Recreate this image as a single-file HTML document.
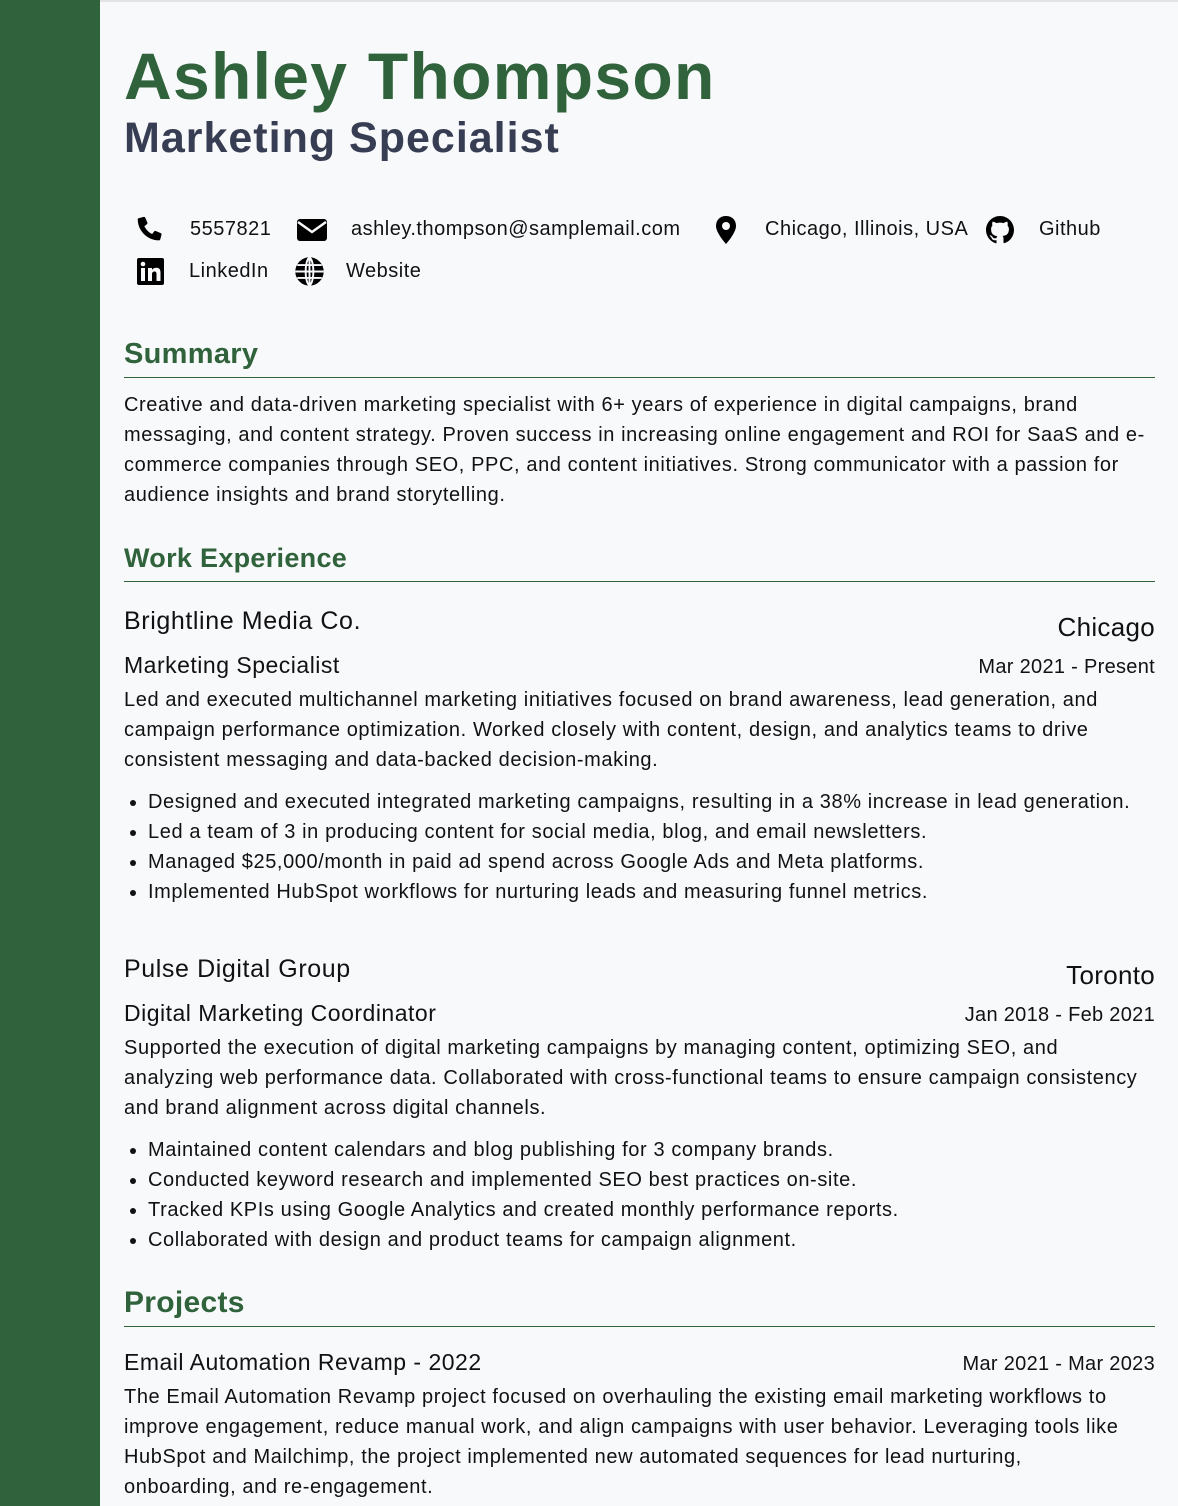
<!DOCTYPE html>
<html><head><meta charset="utf-8"><style>
*{margin:0;padding:0;box-sizing:border-box}
body{width:1178px;height:1506px;overflow:hidden;background:#f8f9fb;font-family:"Liberation Sans",sans-serif;color:#111;position:relative}
.side{position:absolute;left:0;top:0;width:100px;height:1506px;background:#30633b}
.topl{position:absolute;left:100px;top:0;right:0;height:2px;background:#e3e3e3}
.main{position:absolute;left:124px;top:0;width:1031px}
h1{position:absolute;top:38px;font-size:66px;font-weight:bold;color:#30633b;letter-spacing:1.3px;white-space:nowrap}
h2{position:absolute;top:114px;font-size:43px;font-weight:bold;color:#373d52;letter-spacing:1px;white-space:nowrap}
.ab{position:absolute;white-space:nowrap;font-size:20px;line-height:30px;letter-spacing:0.5px}
.sec{position:absolute;left:0;width:1031px;font-weight:bold;color:#30633b;border-bottom:1px solid #30633b;letter-spacing:0.3px}
.p{position:absolute;left:0;width:1100px;font-size:20px;line-height:30px;letter-spacing:0.6px;white-space:nowrap}
ul{position:absolute;left:24px;font-size:20px;line-height:30px;letter-spacing:0.6px;white-space:nowrap}
.r{position:absolute;right:0;white-space:nowrap;letter-spacing:0.3px}
.h{letter-spacing:0.6px}
svg{position:absolute}
</style></head><body>
<div class="side"></div><div class="topl"></div>
<div class="main">
<h1>Ashley Thompson</h1>
<h2>Marketing Specialist</h2>
<svg style="left:10px;top:215px" width="30" height="30" viewBox="0 0 24 24"><path d="M20 2.5l-3.8-1c-.5-.1-1 .1-1.2.6l-1.7 4c-.2.4 0 .9.3 1.2l2.1 1.7c-1.3 2.7-3.5 4.9-6.2 6.2l-1.7-2.1c-.3-.4-.8-.5-1.2-.3l-4 1.7c-.5.2-.7.7-.6 1.2l1 3.8c.1.5.5.8 1 .8C13.3 20.3 21 12.6 21 3.5c0-.5-.3-.9-1-1z" transform="translate(24 0) scale(-1 1)"/></svg>
<div class="ab" style="left:66px;top:214px">5557821</div>
<svg style="left:172px;top:217px" width="32" height="26" viewBox="0 0 32 26"><rect x="1" y="2" width="30" height="22" rx="3" fill="#000"/><path d="M2 5l14 10 14-10" stroke="#f8f9fb" stroke-width="2.5" fill="none"/></svg>
<div class="ab" style="left:227px;top:214px">ashley.thompson@samplemail.com</div>
<svg style="left:590px;top:215px" width="24" height="30" viewBox="0 0 24 30"><path d="M12 1C6 1 2 5 2 11c0 7 10 18 10 18s10-11 10-18C22 5 18 1 12 1z" fill="#000"/><circle cx="12" cy="11" r="4" fill="#f8f9fb"/></svg>
<div class="ab" style="left:641px;top:214px">Chicago, Illinois, USA</div>
<svg style="left:862px;top:216px" width="28" height="28" viewBox="0 0 16 16"><path d="M8 0C3.6 0 0 3.6 0 8c0 3.5 2.3 6.5 5.5 7.6.4.1.5-.2.5-.4v-1.4c-2.2.5-2.7-1-2.7-1-.4-.9-.9-1.2-.9-1.2-.7-.5.1-.5.1-.5.8.1 1.2.8 1.2.8.7 1.2 1.9.9 2.3.7.1-.5.3-.9.5-1.1-1.8-.2-3.6-.9-3.6-4 0-.9.3-1.6.8-2.1-.1-.2-.4-1 .1-2.1 0 0 .7-.2 2.2.8.6-.2 1.3-.3 2-.3s1.4.1 2 .3c1.5-1 2.2-.8 2.2-.8.4 1.1.2 1.9.1 2.1.5.6.8 1.3.8 2.1 0 3.1-1.9 3.7-3.6 3.9.3.3.5.8.5 1.5v2.2c0 .2.1.5.6.4C13.7 14.5 16 11.5 16 8c0-4.4-3.6-8-8-8z"/></svg>
<div class="ab" style="left:915px;top:214px">Github</div>
<svg style="left:13px;top:258px" width="27" height="27" viewBox="0 0 27 27"><rect width="27" height="27" rx="2"/><rect x="4" y="10" width="4" height="13" fill="#f8f9fb"/><circle cx="6" cy="6" r="2.3" fill="#f8f9fb"/><path d="M11 10h4v2c1-2 3-2.3 4.5-2.3 3 0 4 2 4 5V23h-4v-7c0-1.5-.5-2.5-2-2.5s-2.5 1-2.5 2.5v7h-4z" fill="#f8f9fb"/></svg>
<div class="ab" style="left:65px;top:256px">LinkedIn</div>
<svg style="left:170px;top:256px" width="31" height="31" viewBox="0 0 24 24"><circle cx="12" cy="12" r="11"/><path d="M12 1v22M1 12h22M2.5 7h19M2.5 17h19M12 1c-4 3-4 19 0 22M12 1c4 3 4 19 0 22" stroke="#f8f9fb" stroke-width="1.5" fill="none"/></svg>
<div class="ab" style="left:222px;top:256px">Website</div>

<div class="sec" style="top:338px;height:40px;font-size:29px">Summary</div>
<div class="p" style="top:390px">Creative and data-driven marketing specialist with 6+ years of experience in digital campaigns, brand<br>messaging, and content strategy. Proven success in increasing online engagement and ROI for SaaS and e-<br>commerce companies through SEO, PPC, and content initiatives. Strong communicator with a passion for<br>audience insights and brand storytelling.</div>

<div class="sec" style="top:543px;height:39px;font-size:27px">Work Experience</div>
<div class="ab h" style="top:606px;font-size:25px">Brightline Media Co.</div>
<div class="r" style="top:612px;font-size:26px">Chicago</div>
<div class="ab" style="top:650px;font-size:23px">Marketing Specialist</div>
<div class="r" style="top:656px;font-size:20px">Mar 2021 - Present</div>
<div class="p" style="top:685px">Led and executed multichannel marketing initiatives focused on brand awareness, lead generation, and<br>campaign performance optimization. Worked closely with content, design, and analytics teams to drive<br>consistent messaging and data-backed decision-making.</div>
<ul style="top:787px"><li>Designed and executed integrated marketing campaigns, resulting in a 38% increase in lead generation.</li><li>Led a team of 3 in producing content for social media, blog, and email newsletters.</li><li>Managed $25,000/month in paid ad spend across Google Ads and Meta platforms.</li><li>Implemented HubSpot workflows for nurturing leads and measuring funnel metrics.</li></ul>

<div class="ab h" style="top:954px;font-size:25px">Pulse Digital Group</div>
<div class="r" style="top:960px;font-size:26px">Toronto</div>
<div class="ab" style="top:998px;font-size:23px">Digital Marketing Coordinator</div>
<div class="r" style="top:1004px;font-size:20px">Jan 2018 - Feb 2021</div>
<div class="p" style="top:1033px">Supported the execution of digital marketing campaigns by managing content, optimizing SEO, and<br>analyzing web performance data. Collaborated with cross-functional teams to ensure campaign consistency<br>and brand alignment across digital channels.</div>
<ul style="top:1135px"><li>Maintained content calendars and blog publishing for 3 company brands.</li><li>Conducted keyword research and implemented SEO best practices on-site.</li><li>Tracked KPIs using Google Analytics and created monthly performance reports.</li><li>Collaborated with design and product teams for campaign alignment.</li></ul>

<div class="sec" style="top:1286px;height:41px;font-size:30px">Projects</div>
<div class="ab" style="top:1347px;font-size:23px">Email Automation Revamp - 2022</div>
<div class="r" style="top:1353px;font-size:20px">Mar 2021 - Mar 2023</div>
<div class="p" style="top:1382px">The Email Automation Revamp project focused on overhauling the existing email marketing workflows to<br>improve engagement, reduce manual work, and align campaigns with user behavior. Leveraging tools like<br>HubSpot and Mailchimp, the project implemented new automated sequences for lead nurturing,<br>onboarding, and re-engagement.</div>
</div>
</body></html>
